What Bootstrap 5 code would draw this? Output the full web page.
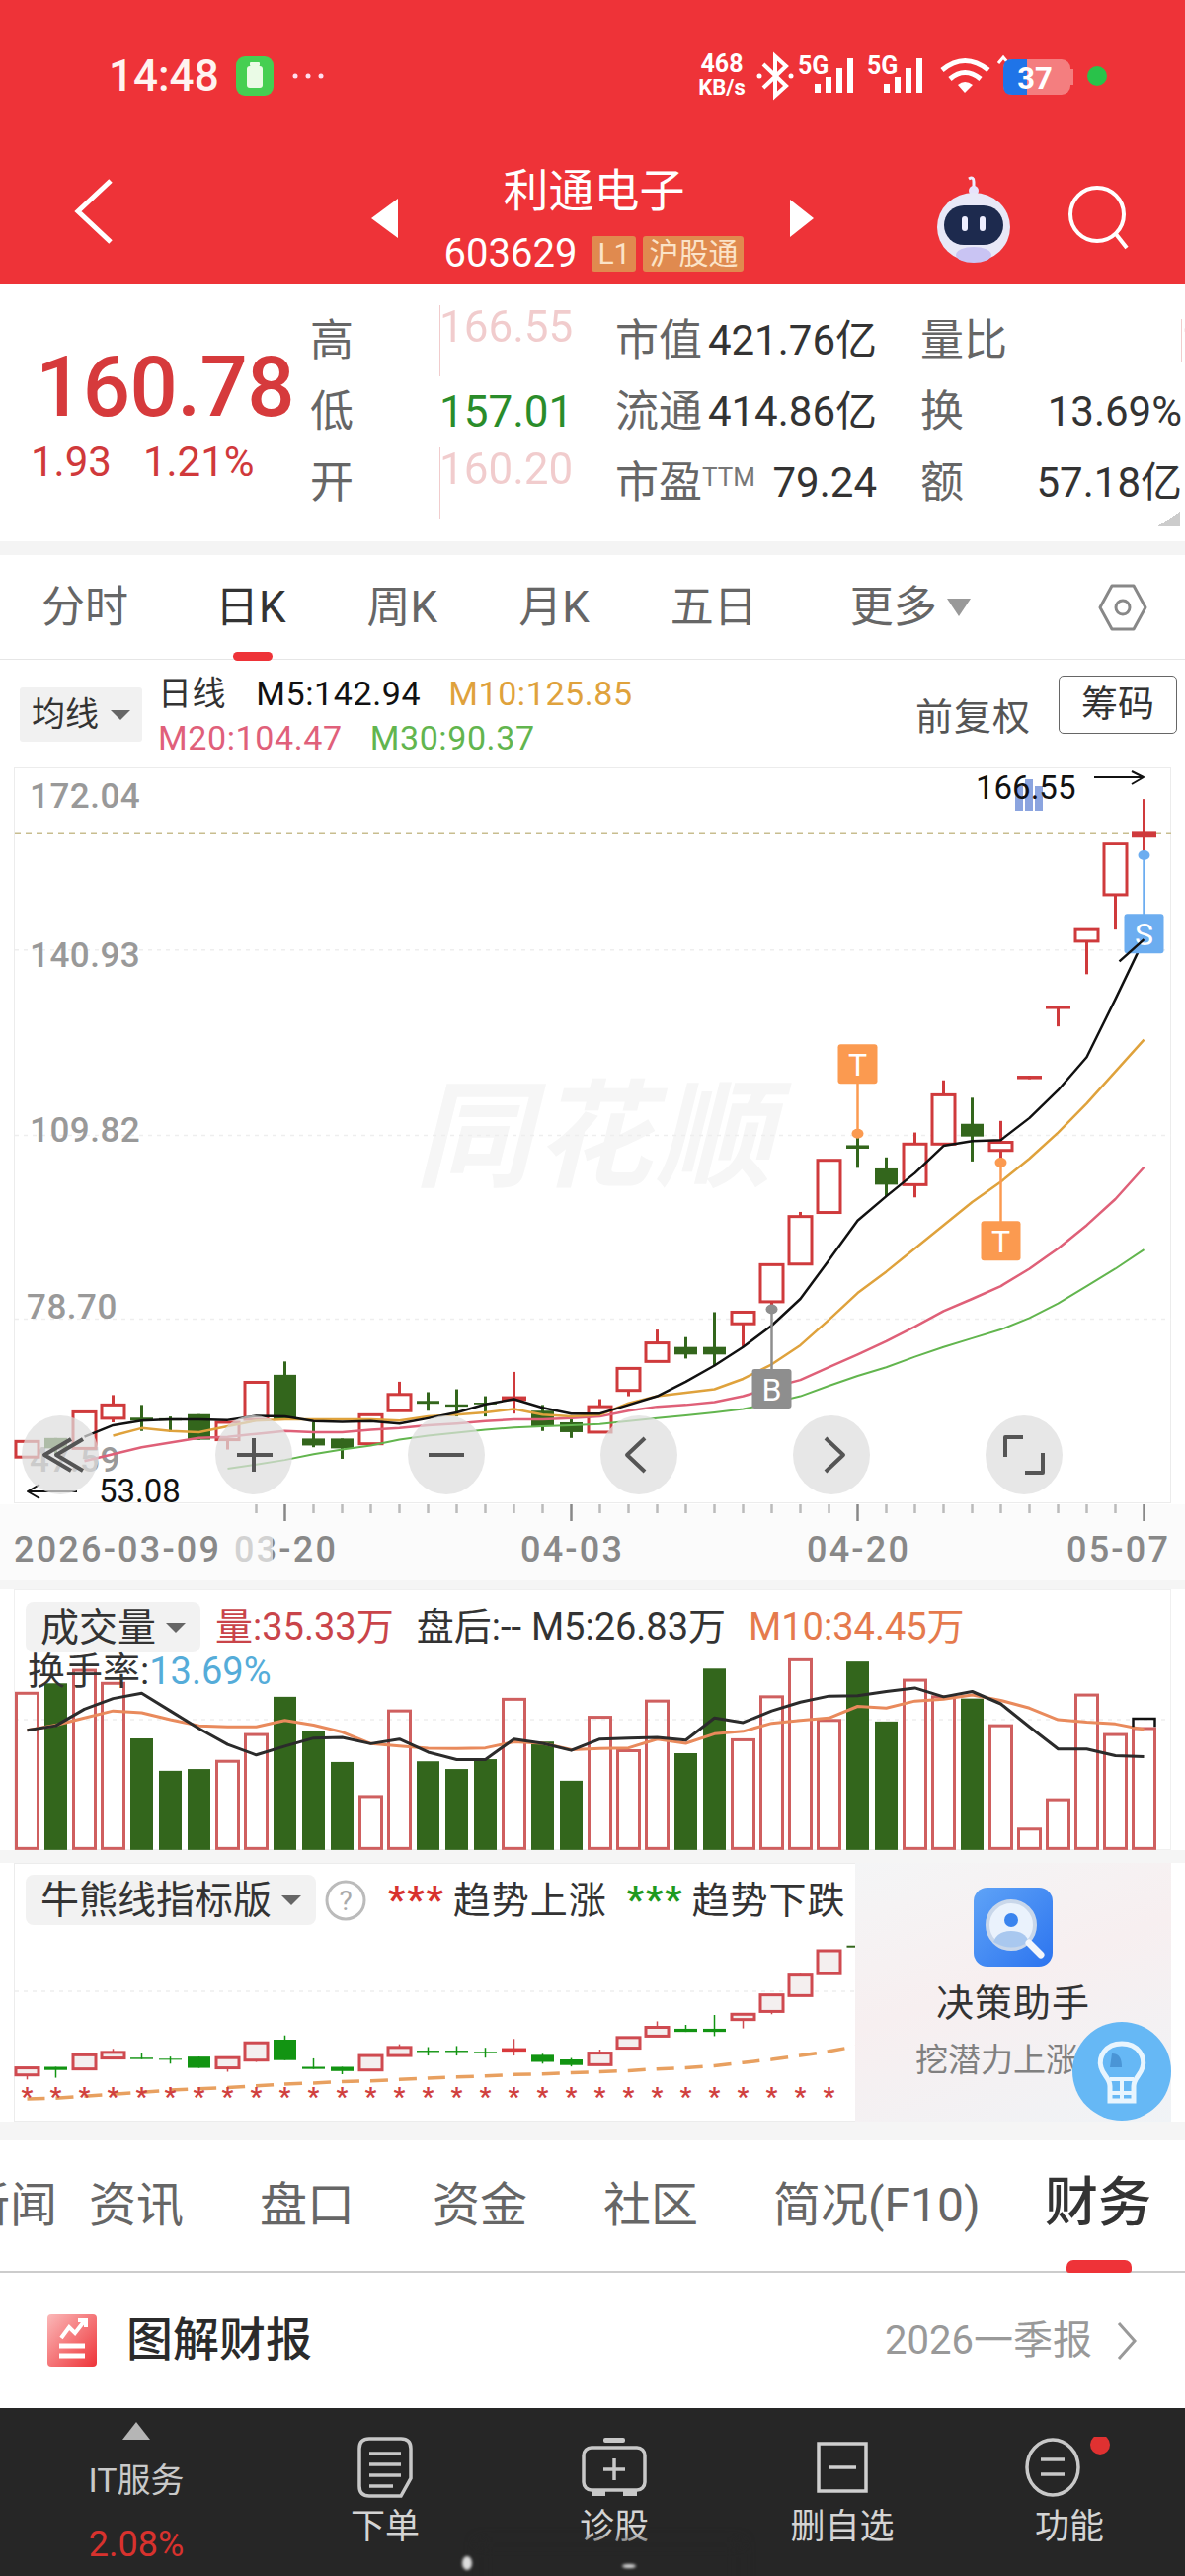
<!DOCTYPE html>
<html lang="zh">
<head>
<meta charset="utf-8">
<title>利通电子</title>
<link href="https://cdn.jsdelivr.net/npm/bootstrap@5.3.0/dist/css/bootstrap.min.css" rel="stylesheet">
<style>
html,body{margin:0;background:#fff}
body{font-family:Roboto,"Noto Sans CJK SC",sans-serif;color:#333}
svg{display:block}
svg text{font-family:Roboto,"Noto Sans CJK SC",sans-serif}
.app{width:1200px;height:2608px;overflow:hidden;position:relative}
.hdr{background:#ee3338;height:288px;color:#fff}
.sbar{height:154px;padding-left:110px}
.clock{font-size:44px;font-weight:500;line-height:1;color:#fff3f0}
.navr{height:134px;display:grid;grid-template-columns:350px 500px 350px;align-items:center}
.nmid{padding:0 26px 0 26px}
.ttl{font-size:46px;line-height:58px;margin-top:0;text-align:center}
.codeln{font-size:40px;line-height:44px;margin-top:13px;gap:15px}
.tagb{background:#e08a4f;color:#fbe3c8;font-size:30px;line-height:36px;height:36px;padding:0 6px;border-radius:3px}
.tagb+.tagb{margin-left:-8px}
.stat{height:260px;display:grid;grid-template-columns:314px 131px 178px 265px 44px 268px;grid-template-rows:72px 72px 72px;padding-top:21px;align-items:center}
.pricebox{grid-row:1/4;padding-left:36px}
.bigp{font-size:85px;font-weight:500;color:#d63a3c;line-height:86px;margin-top:8px;letter-spacing:-.5px}
.subp{font-size:42px;color:#d0393b;line-height:50px;margin-top:8px;margin-left:-5px;gap:32px}
.lb{font-size:44px;color:#666;line-height:1;white-space:nowrap}
.vr{font-size:44px;line-height:1;color:#c8393c}
.vg{font-size:44px;line-height:1;color:#2a8c2a}
.vk{font-size:42px;line-height:1;color:#333;white-space:nowrap}
.sup{font-size:26px;color:#777;vertical-align:12px}
.corner{position:absolute;left:1172px;top:518px;width:23px;height:15px;background:linear-gradient(to bottom right,transparent 50%,#ccc 50%)}
.band1{height:14px;background:#f4f4f4}
.band2{background:#f5f5f5}
.kt{height:106px;border-bottom:1px solid #e6e6e6;position:relative;padding-left:42px;gap:0}
.kti{font-size:44px;color:#666;line-height:1;white-space:nowrap}
.ktu{position:absolute;left:236px;top:98px;width:40px;height:9px;background:#ee3338;border-radius:5px}
.kh{height:109px;position:relative;padding:12px 8px 0 20px}
.pill{background:#f1f1f1;color:#333;font-size:34px;line-height:55px;height:55px;padding:0 12px;border-radius:3px;white-space:nowrap;display:flex;align-items:center;gap:12px}
.caret{width:0;height:0;border-left:10px solid transparent;border-right:10px solid transparent;border-top:10px solid #666;display:inline-block}
.leg{font-size:34px;line-height:45px;margin-left:16px;white-space:nowrap;letter-spacing:.6px}
.cgo{color:#dfa23c}.cpk{color:#e0607a}.cgr{color:#62b54e}
.fq{font-size:38px;color:#555;letter-spacing:1px;line-height:1;margin-top:27px}
.cm{border:1px solid #666;border-radius:5px;font-size:37px;line-height:57px;height:59px;width:120px;text-align:center;margin-left:28px;margin-top:4px;color:#333}
.pan{position:relative}
.phead{position:absolute;left:26px;top:13px;font-size:38px;line-height:50px;white-space:nowrap}
.pill2{background:#f2f2f2;height:51px;padding:0 15px;border-radius:8px;font-size:39px;color:#333;display:flex;align-items:center;gap:10px}
.t38{font-size:38px;line-height:50px;white-space:nowrap}
.cred{color:#c9444a}.cor{color:#e57a4d}.cbl{color:#55acd9}
.tov{position:absolute;left:28px;top:58px}
.aside{width:320px;height:262px;background:linear-gradient(160deg,#f4f5f6 0%,#f7eff0 45%,#f0f3f6 100%);position:relative;text-align:center;padding-top:25px}
.dn{font-size:38px;line-height:48px;margin-top:13px;color:#333;letter-spacing:1px}
.ds{font-size:33px;line-height:44px;margin-top:12px;color:#808080;white-space:nowrap}
.bulb{position:absolute;left:220px;top:161px}
.tabs{height:134px;border-bottom:2px solid #ccc;position:relative;font-size:48px;color:#666}
.tabi{position:absolute;top:36px;line-height:60px;white-space:nowrap}
.taba{font-size:54px;color:#333;font-weight:500;top:34px}
.tabu{position:absolute;left:1080px;top:121px;width:66px;height:13px;background:#ee3338;border-radius:7px 7px 3px 3px}
.rep{height:137px;padding:0 48px}
.rept{font-size:47px;font-weight:500;color:#2b2b2b;margin-left:25px}
.repm{font-size:40px;color:#999;white-space:nowrap}
.foot{height:170px;background:#262626;display:grid;grid-template-columns:276px 228px 236px 226px 234px;color:#d4d4d4;position:relative}
.fi{text-align:center;font-size:35px;line-height:40px;padding-top:29px}
.fi svg{margin:0 auto}
.fl{margin-top:10px;white-space:nowrap}
.fit{font-size:34px;line-height:40px;margin-top:21px;color:#c9c9c9}
.fip{font-size:36px;line-height:40px;margin-top:25px;color:#d8322e}
.smudge{position:absolute;left:485px;top:136px;width:265px;height:60px;background:#262626;filter:blur(7px)}
.spk{position:absolute;background:#ddd;filter:blur(1.5px);border-radius:50%}
</style>
</head>
<body>
<div class="app">
  <div class="hdr">
    <div class="sbar d-flex align-items-center">
      <span class="clock">14:48</span>
      <svg class="ms-3" width="40" height="42" viewBox="0 0 40 42"><rect x="1" y="1" width="38" height="40" rx="9" fill="#45cf52"/><rect x="12" y="11" width="16" height="22" rx="3" fill="#eafbe6"/><rect x="15" y="7" width="10" height="4" rx="1" fill="#eafbe6"/></svg>
      <svg class="ms-3" width="36" height="8" viewBox="0 0 36 8"><circle cx="5" cy="4" r="2.5" fill="#fde"/><circle cx="18" cy="4" r="2.5" fill="#fde"/><circle cx="31" cy="4" r="2.5" fill="#fde"/></svg>
      <svg class="ms-auto" width="494" height="60" viewBox="706 47 494 60">
        <text x="731" y="73" font-size="25" font-weight="700" fill="#fff" text-anchor="middle">468</text>
        <text x="731" y="96" font-size="22" font-weight="700" fill="#fff" text-anchor="middle">KB/s</text>
        <path d="M773 65 L796 87 L785 97 V57 L796 67 L773 89" fill="none" stroke="#fff" stroke-width="4"/>
        <circle cx="769" cy="77" r="2.5" fill="#fff"/><circle cx="801" cy="77" r="2.5" fill="#fff"/>
        <text x="808" y="75" font-size="25" font-weight="700" fill="#fff">5G</text>
        <g fill="#fff"><rect x="825" y="85" width="6" height="9"/><rect x="836" y="78" width="6" height="16"/><rect x="847" y="69" width="6" height="25"/><rect x="858" y="59" width="6" height="35"/></g>
        <text x="878" y="75" font-size="25" font-weight="700" fill="#fff">5G</text>
        <g fill="#fff"><rect x="895" y="85" width="6" height="9"/><rect x="906" y="78" width="6" height="16"/><rect x="917" y="69" width="6" height="25"/><rect x="928" y="59" width="6" height="35"/></g>
        <path d="M954 71 Q977 52 1001 71 M962 80 Q977 67 993 80" fill="none" stroke="#fff" stroke-width="5"/><path d="M970 86 Q977 80 985 86 L977 94Z" fill="#fff"/>
        <path d="M1011 64 L1016 58 L1021 64" fill="none" stroke="#fff" stroke-width="3"/>
        <rect x="1016" y="60" width="68" height="36" rx="9" fill="#f47e7f"/><path d="M1025 60 H1040 V96 H1025 Q1016 96 1016 87 V69 Q1016 60 1025 60Z" fill="#1f74e8"/><rect x="1084" y="70" width="3" height="16" fill="#f47e7f"/>
        <text x="1048" y="90" font-size="31" font-weight="700" fill="#fff" text-anchor="middle">37</text>
        <circle cx="1111" cy="77" r="10" fill="#29c24a"/>
      </svg>
    </div>
    <div class="navr">
      <svg width="350" height="134" viewBox="0 154 350 134"><polyline points="112,183 79,214 112,245" fill="none" stroke="#fff" stroke-width="5"/></svg>
      <div class="nmid d-flex align-items-center justify-content-between">
        <svg width="27" height="40" viewBox="0 0 27 40"><path d="M27 0V40L0 20Z" fill="#fff"/></svg>
        <div>
          <div class="ttl">利通电子</div>
          <div class="codeln d-flex align-items-center"><span>603629</span><span class="tagb">L1</span><span class="tagb">沪股通</span></div>
        </div>
        <svg width="24" height="38" viewBox="0 0 24 38"><path d="M0 0V38L24 19Z" fill="#fff"/></svg>
      </div>
      <div class="d-flex align-items-center">
        <svg width="86" height="90" viewBox="0 0 86 90" style="margin-left:93px">
          <path d="M43 18 V8 Q43 2 38 5" fill="none" stroke="#eef" stroke-width="3"/><circle cx="43" cy="17" r="5" fill="#e7e3fb"/>
          <ellipse cx="43" cy="54" rx="37" ry="35" fill="#e8e8f7"/><ellipse cx="43" cy="82" rx="18" ry="8" fill="#c9c4f3"/>
          <rect x="13" y="32" width="60" height="40" rx="20" fill="#1d2a4e"/><rect x="31" y="43" width="6" height="15" rx="3" fill="#eef"/><rect x="49" y="43" width="6" height="15" rx="3" fill="#eef"/>
        </svg>
        <svg width="66" height="66" viewBox="0 0 66 66" style="margin-left:52px"><circle cx="30" cy="29" r="27" fill="none" stroke="#fff" stroke-width="4"/><path d="M49 49 L60 63" stroke="#fff" stroke-width="4"/></svg>
      </div>
    </div>
  </div>

  <div class="stat">
    <div class="pricebox">
      <div class="bigp">160.78</div>
      <div class="subp d-flex"><span>1.93</span><span>1.21%</span></div>
    </div>
    <div class="lb">高</div><div class="vr">166.55</div><div class="d-flex justify-content-between align-items-center"><span class="lb">市值</span><span class="vk">421.76亿</span></div><div></div><div class="d-flex justify-content-between align-items-center"><span class="lb">量比</span><span class="vr" style="margin-right:3px">1.37</span></div>
    <div class="lb">低</div><div class="vg">157.01</div><div class="d-flex justify-content-between align-items-center"><span class="lb">流通</span><span class="vk">414.86亿</span></div><div></div><div class="d-flex justify-content-between align-items-center"><span class="lb">换</span><span class="vk" style="margin-right:3px">13.69%</span></div>
    <div class="lb">开</div><div class="vr">160.20</div><div class="d-flex justify-content-between align-items-center"><span class="lb">市盈<span class="sup">TTM</span></span><span class="vk">79.24</span></div><div></div><div class="d-flex justify-content-between align-items-center"><span class="lb">额</span><span class="vk" style="margin-right:3px">57.18亿</span></div>
  </div>
  <div class="corner"></div>
  <div class="band1"></div>

  <div class="kt d-flex align-items-center">
    <span class="kti">分时</span><span class="kti" style="margin-left:88px;color:#333">日K</span><span class="kti" style="margin-left:82px">周K</span><span class="kti" style="margin-left:82px">月K</span><span class="kti" style="margin-left:82px">五日</span><span class="kti" style="margin-left:94px">更多</span>
    <span class="caret" style="margin-left:10px;border-left-width:12px;border-right-width:12px;border-top:18px solid #999"></span>
    <svg class="ms-auto" style="margin-right:38px" width="50" height="50" viewBox="0 0 50 50"><path d="M14 3H36L48 25L36 47H14L2 25Z" fill="none" stroke="#888" stroke-width="3" stroke-linejoin="round"/><circle cx="25" cy="25" r="7" fill="none" stroke="#888" stroke-width="3"/></svg>
    <div class="ktu"></div>
  </div>

  <div class="kh d-flex align-items-start">
    <div class="pill mt-3">均线<span class="caret"></span></div>
    <div class="leg">
      <div class="d-flex"><span style="color:#333">日线</span><span style="color:#111;margin-left:30px">M5:142.94</span><span class="cgo" style="margin-left:28px">M10:125.85</span></div>
      <div class="d-flex"><span class="cpk">M20:104.47</span><span class="cgr" style="margin-left:28px">M30:90.37</span></div>
    </div>
    <div class="ms-auto d-flex"><span class="fq">前复权</span><span class="cm">筹码</span></div>
  </div>

  <svg id="kchart" width="1200" height="823" viewBox="0 777 1200 823"></svg>
  <div class="band2" style="height:9px"></div>

  <div class="pan">
    <svg id="vchart" width="1200" height="264" viewBox="0 1609 1200 264"></svg>
    <div class="phead d-flex">
      <div class="pill2">成交量<span class="caret"></span></div>
      <span class="cred" style="margin-left:15px">量:35.33万</span>
      <span style="margin-left:23px">盘后:-- </span>
      <span style="margin-left:10px">M5:26.83万</span>
      <span class="cor" style="margin-left:23px">M10:34.45万</span>
    </div>
    <div class="tov t38">换手率:<span class="cbl">13.69%</span></div>
  </div>
  <div class="band2" style="height:13px"></div>

  <div class="d-flex">
    <div class="pan">
      <svg id="ichart" width="866" height="262" viewBox="0 1886 866 262"></svg>
      <div class="phead d-flex align-items-center" style="top:12px">
        <div class="pill2">牛熊线指标版<span class="caret"></span></div>
        <svg style="margin-left:9px" width="42" height="42" viewBox="0 0 42 42"><circle cx="21" cy="21" r="19" fill="#fff" stroke="#bbb" stroke-width="3"/><text x="21" y="31" font-size="28" fill="#aaa" text-anchor="middle">?</text></svg>
        <span style="margin-left:22px;color:#d8322e;font-weight:700;letter-spacing:2px">***</span><span style="margin-left:8px;letter-spacing:1px">趋势上涨</span>
        <span style="margin-left:20px;color:#1f9a1f;font-weight:700;letter-spacing:2px">***</span><span style="margin-left:8px;letter-spacing:1px">趋势下跌</span>
      </div>
    </div>
    <div class="aside">
      <svg class="mx-auto" width="80" height="80" viewBox="0 0 80 80"><defs><linearGradient id="bg1" x1="0" y1="0" x2="1" y2="1"><stop offset="0" stop-color="#5fa3f7"/><stop offset="1" stop-color="#2c74ef"/></linearGradient></defs><rect width="80" height="80" rx="14" fill="url(#bg1)"/><circle cx="38" cy="38" r="24" fill="#eaf2fc" stroke="#c9d7ea" stroke-width="4"/><circle cx="38" cy="33" r="7" fill="#3a84ee"/><path d="M20 55 Q24 44 38 44 Q52 44 56 55 Q38 66 20 55Z" fill="#a9c8ef"/><path d="M56 56 L68 68" stroke="#f3f6fb" stroke-width="7" stroke-linecap="round"/></svg>
      <div class="dn">决策助手</div>
      <div class="ds">挖潜力上涨股</div>
      <svg class="bulb" width="100" height="100" viewBox="0 0 100 100"><circle cx="50" cy="50" r="50" fill="#66b8f5"/><path d="M50 22 C33 22 26 36 29 46 C31 54 38 57 38 65 V80 H62 V65 C62 57 69 54 71 46 C74 36 67 22 50 22Z" fill="none" stroke="#e8f5fe" stroke-width="5"/><path d="M38 58 H62 M50 58 V78 M40 72 H60" stroke="#e8f5fe" stroke-width="4" fill="none"/><path d="M40 32 C48 32 50 38 50 46 H38Z" fill="#4a95d6"/></svg>
    </div>
  </div>
  <div class="band2" style="height:19px"></div>

  <div class="tabs">
    <span class="tabi" style="left:-38px">新闻</span>
    <span class="tabi" style="left:90px">资讯</span>
    <span class="tabi" style="left:263px">盘口</span>
    <span class="tabi" style="left:438px">资金</span>
    <span class="tabi" style="left:611px">社区</span>
    <span class="tabi" style="left:783px">简况(F10)</span>
    <span class="tabi taba" style="left:1058px">财务</span>
    <div class="tabu"></div>
  </div>

  <div class="rep d-flex align-items-center">
    <svg width="55" height="53" viewBox="0 0 55 53"><defs><linearGradient id="bg2" x1="0" y1="0" x2="1" y2="1"><stop offset="0" stop-color="#fbb9b9"/><stop offset="1" stop-color="#ee3338"/></linearGradient></defs><rect width="50" height="53" rx="4" fill="url(#bg2)"/><path d="M14 24 L22 13 L28 19 L38 6 M31 6 H39 V13" stroke="#fff" stroke-width="4" fill="none"/><path d="M12 32 H38 M12 42 H38" stroke="#fff" stroke-width="5"/></svg>
    <span class="rept">图解财报</span>
    <span class="repm ms-auto">2026一季报</span>
    <svg class="ms-4" width="22" height="44" viewBox="0 0 22 44"><polyline points="3,4 19,22 3,40" fill="none" stroke="#999" stroke-width="3"/></svg>
  </div>

  <div class="foot">
    <div class="fi" style="padding-top:14px">
      <svg width="28" height="18" viewBox="0 0 28 18"><path d="M14 0L28 18H0Z" fill="#b5b5b5"/></svg>
      <div class="fit">IT服务</div>
      <div class="fip">2.08%</div>
    </div>
    <div class="fi">
      <svg width="56" height="62" viewBox="0 0 56 62"><path d="M12 2H44Q54 2 54 12V42L44 60H12Q2 60 2 50V12Q2 2 12 2Z" fill="none" stroke="#c8c8c8" stroke-width="3.5"/><path d="M12 17H44M12 28H44M12 39H44M12 50H36" stroke="#c8c8c8" stroke-width="3.5"/></svg>
      <div class="fl">下单</div>
    </div>
    <div class="fi">
      <svg width="66" height="62" viewBox="0 0 66 62"><rect x="22" y="1" width="22" height="5" rx="2" fill="#c8c8c8"/><rect x="2" y="11" width="62" height="43" rx="8" fill="none" stroke="#c8c8c8" stroke-width="3.5"/><path d="M33 22V44M22 33H44" stroke="#c8c8c8" stroke-width="3.5"/><path d="M10 54H24V60H10ZM42 54H56V60H42Z" fill="#c8c8c8"/></svg>
      <div class="fl">诊股</div>
    </div>
    <div class="fi" style="padding-top:34px">
      <svg width="52" height="52" viewBox="0 0 52 52"><rect x="2" y="2" width="48" height="48" fill="none" stroke="#cfcfcf" stroke-width="3.5"/><path d="M12 26H40" stroke="#cfcfcf" stroke-width="3.5"/></svg>
      <div class="fl" style="margin-top:15px">删自选</div>
    </div>
    <div class="fi">
      <svg width="90" height="62" viewBox="0 0 90 62" style="margin-left:72px"><ellipse cx="28" cy="31" rx="26" ry="28" fill="none" stroke="#c8c8c8" stroke-width="3.5"/><path d="M16 23H40M16 38H40" stroke="#c8c8c8" stroke-width="3.5"/><ellipse cx="76" cy="8" rx="10" ry="10" fill="#e03131"/></svg>
      <div class="fl">功能</div>
    </div>
    <div class="smudge"></div>
    <div class="spk" style="left:468px;top:150px;width:10px;height:14px"></div>
    <div class="spk" style="left:630px;top:158px;width:14px;height:4px"></div>
  </div>
</div>

<script src="https://cdn.jsdelivr.net/npm/bootstrap@5.3.0/dist/js/bootstrap.bundle.min.js"></script>
<script>
const cx=i=>27.5+29*i, P=z=>680+z/1.704, V=z=>1600+z/2.8;
const RED='#cf3a3c',GRN='#33661c';
function line(x1,y1,x2,y2,c,w,extra){return `<line x1="${x1}" y1="${y1}" x2="${x2}" y2="${y2}" stroke="${c}" stroke-width="${w}" ${extra||''}/>`}
function poly(pts,c,w,extra){return `<polyline points="${pts.map(p=>p.join(',')).join(' ')}" fill="none" stroke="${c}" stroke-width="${w}" stroke-linejoin="round" ${extra||''}/>`}
function txt(x,y,s,size,fill,extra){return `<text x="${x}" y="${y}" font-size="${size}" fill="${fill}" ${extra||''}>${s}</text>`}

/* price candles: type, body top, body bottom, wick top, wick bottom (reference y scale) */
const K=[['h',1328,1355,1328,1355],['g',1322,1340,1322,1350],['h',1277,1340,1277,1340],['h',1265,1288,1248,1295],['g',1287,1292,1265,1310],['g',1288,1292,1285,1312],['g',1281,1325,1281,1325],['h',1295,1325,1295,1342],['h',1226,1290,1226,1290],['g',1213,1290,1190,1290],['g',1323,1335,1295,1338],['g',1323,1340,1323,1358],['h',1282,1332,1282,1332],['h',1247,1275,1225,1275],['g',1258,1263,1243,1275],['g',1264,1268,1238,1285],['g',1261,1264,1250,1285],['r',1250,1258,1208,1280],['g',1275,1302,1265,1310],['g',1295,1312,1290,1322],['h',1268,1312,1255,1312],['h',1202,1240,1202,1250],['h',1158,1190,1135,1190],['g',1165,1178,1148,1185],['g',1165,1178,1105,1198],['h',1105,1125,1105,1165],['h',1023,1087,1023,1100],['h',940,1022,932,1022],['h',843,933,843,933],['g',817,823,800,856],['g',857,885,838,905],['h',815,885,795,907],['h',730,815,705,815],['g',780,802,735,845],['h',812,826,775,845],['r',697,703,697,703],['r',577,582,577,612],['h',445,465,445,522],['h',296,385,296,445],['r',275,285,220,310]];
const ma5=[,,1320,1300,1292,1290,1290,1291,1284,1285,1293,1294,1293,1297,1288,1278,1264,1255,1270,1280,1280,1265,1250,1225,1197,1165,1128,1082,1015,947,905,865,818,810,808,770,722,665,565,462];
const ma10=[,,,1318,1305,1310,1312,1302,1292,1290,1290,1290,1290,1292,1285,1282,1278,1272,1282,1285,1282,1262,1250,1244,1238,1220,1195,1162,1118,1072,1035,995,955,915,880,840,795,745,690,635];
const ma20=[,,1362,1350,1338,1330,1322,1320,1315,1310,1312,1312,1308,1305,1300,1297,1293,1290,1290,1288,1285,1275,1268,1265,1260,1250,1235,1222,1200,1178,1155,1130,1103,1082,1060,1030,995,955,910,855];
const ma30=[,,,,,,,1375,1368,1360,1350,1342,1335,1325,1318,1313,1308,1304,1302,1300,1298,1293,1288,1283,1278,1272,1262,1250,1232,1215,1200,1182,1165,1150,1135,1115,1090,1060,1030,997];
const series=(a,f)=>a.map((v,i)=>[cx(i),f(v)]).filter(p=>p);

let s='';
s+=`<rect x="14.5" y="777.5" width="1171" height="744" fill="#fff" stroke="#ececec"/>`;
s+=`<rect x="0" y="1523" width="1200" height="77" fill="#fbfbfb"/>`;
s+=`<text x="420" y="1192" font-size="118" font-weight="700" fill="#f6f6f6" letter-spacing="4" font-style="italic">同花顺</text>`;
s+=line(15,P(278),1186,P(278),'#c8bd8f',1.5,'stroke-dasharray="6 5"');
[480,800,1117].forEach(z=>s+=line(15,P(z),1186,P(z),'#eeeeee',1.5,'stroke-dasharray="4 5"'));
[[30,818,'172.04'],[30,979,'140.93'],[30,1156,'109.82'],[27,1335,'78.70'],[30,1490,'47.59']].forEach(a=>s+=txt(a[0],a[1],a[2],35,'#999','font-weight="500" letter-spacing=".5"'));
K.forEach((k,i)=>{const x=cx(i),[t,a,b,h,l]=k,c=t=='g'?GRN:RED;
  s+=line(x,P(h),x,P(l),c,3);
  if(t=='h')s+=`<rect x="${x-11.5}" y="${P(a)}" width="23" height="${P(b)-P(a)}" fill="#fff" stroke="${c}" stroke-width="3"/>`;
  else s+=`<rect x="${x-11.5-(t=='r'?1:0)}" y="${P(a)}" width="${t=='r'?25:23}" height="${P(b)-P(a)}" fill="${c}"/>`;
});
s+=poly(series(ma30,P),'#62b54e',2);s+=poly(series(ma20,P),'#df6078',2.5);s+=poly(series(ma10,P),'#dfa23c',2.5);s+=poly(series(ma5,P),'#111',2.5);
/* trade markers */
function mark(i,y1,y2,by,c,t){const x=cx(i);let m=line(x,P(y1),x,P(y2),c,2.5)+`<ellipse cx="${x}" cy="${P(y1)}" rx="6" ry="5" fill="${c}"/>`;
 m+=`<rect x="${x-20}" y="${P(by)}" width="40" height="40" rx="3" fill="${c}"/>`+txt(x,P(by)+32,t,32,'#fff','text-anchor="middle"');return m}
s+=mark(29,797,700,643,'#fb9a50','T');s+=mark(34,847,950,948,'#fb9a50','T');s+=mark(26,1100,1205,1203,'#8e8e8e','B');s+=mark(39,317,420,418,'#6cadf0','S');
s+=poly(series(ma5.map((v,i)=>i==39?v:undefined),P),'#111',2.5);
s+=line(cx(38)+4,P(500),cx(39),P(462),'#111',2.5);
/* extremes */
s+=`<g fill="#7f9bdc" opacity=".9"><rect x="1028" y="796" width="8" height="25"/><rect x="1038" y="789" width="8" height="32"/><rect x="1048" y="796" width="8" height="25"/></g>`;
s+=txt(988,809,'166.55',33,'#111');
s+=line(1108,787,1158,787,'#111',2)+poly([[1146,781],[1158,787],[1146,794]],'#111',2);
s+=line(28,1510,78,1510,'#111',2)+poly([[40,1503],[28,1510],[40,1517]],'#111',2);
s+=txt(100,1521,'53.08',33,'#111');
/* overlay buttons */
[61,257,452,647,842,1037].forEach(x=>s+=`<ellipse cx="${x}" cy="1473" rx="39" ry="40" fill="#dedede" fill-opacity=".72"/>`);
const ic='#555';
s+=poly([[72,1457],[45,1473],[72,1489]],ic,4)+poly([[84,1457],[57,1473],[84,1489]],ic,4);
s+=line(240,1473,276,1473,ic,4)+line(257,1456,257,1490,ic,4);
s+=line(434,1473,470,1473,ic,4);
s+=poly([[653,1456],[635,1473],[653,1490]],ic,4);
s+=poly([[836,1456],[854,1473],[836,1490]],ic,4);
s+=poly([[1018,1475],[1018,1455],[1036,1455]],ic,4)+poly([[1038,1491],[1056,1491],[1056,1471]],ic,4);
/* axis ticks and dates */
for(let i=8;i<40;i++){const big=(i-9)%10==0;s+=line(cx(i),1523,cx(i),big?1540:1532,big?'#888':'#bbb',2.5)}
const dt=(x,v,o)=>txt(x,1581,v,36,o||'#888','font-weight="500" letter-spacing="2.2"');
s+=dt(14,'2026-03-09');s+=dt(237,'03-20');s+=`<rect x="236" y="1550" width="40" height="36" fill="#fbfbfb" fill-opacity=".65"/>`;s+=dt(527,'04-03');s+=dt(817,'04-20');s+=dt(1080,'05-07');
document.getElementById('kchart').innerHTML=s;

/* volume */
const VT=[[320,'h'],[292,'g'],[255,'h'],[292,'h'],[448,'g'],[540,'g'],[535,'g'],[513,'h'],[437,'h'],[330,'g'],[428,'g'],[515,'g'],[613,'h'],[370,'h'],[513,'g'],[535,'g'],[507,'g'],[337,'h'],[457,'g'],[568,'g'],[388,'h'],[483,'h'],[342,'h'],[490,'g'],[250,'g'],[452,'h'],[330,'h'],[225,'h'],[397,'h'],[230,'g'],[400,'g'],[283,'h'],[330,'h'],[335,'g'],[412,'h'],[705,'h'],[622,'h'],[325,'h'],[437,'h'],[420,'h']];
const vm5=[425,412,365,335,320,370,420,465,495,470,447,445,463,450,487,508,508,450,462,482,450,447,445,453,390,403,370,345,328,327,315,305,330,315,350,415,478,478,497,500];
const vm10=[425,410,390,370,375,395,412,415,415,397,410,430,463,470,476,477,475,458,462,480,477,475,450,462,435,428,405,397,390,357,362,342,337,325,340,362,395,402,407,423];
let v=`<rect x="14.5" y="1609.5" width="1171" height="263" fill="#fff" stroke="#f0f0f0"/>`;
v+=line(15,V(395),1186,V(395),'#eeeeee',1.5,'stroke-dasharray="4 5"');
const base=V(764);
VT.forEach((b,i)=>{const x=cx(i),y=V(b[0]);
 if(b[1]=='g')v+=`<rect x="${x-11.5}" y="${y}" width="23" height="${base-y}" fill="#33661c"/>`;
 else v+=`<rect x="${x-11}" y="${y}" width="22" height="${base-y-1.5}" fill="#fff" fill-opacity="0" stroke="#cf5f5f" stroke-width="3"/>`;
});
v+=poly(vm10.map((z,i)=>[cx(i),V(z)]),'#e98a5c',3);
v+=poly(vm5.map((z,i)=>[cx(i),V(z)]),'#2b2b2b',3);
const e=cx(39);v+=`<path d="M${e-11} ${V(415)}V${V(392)}H${e+11}V${V(415)}" fill="none" stroke="#111" stroke-width="2.5"/>`;
document.getElementById('vchart').innerHTML=v;

/* indicator */
const I=[['h',1382,1402,1382,1415],['g',1379,1388,1379,1410],['h',1345,1385,1345,1385],['h',1338,1354,1328,1354],['g',1353,1357,1340,1357],['g',1356,1359,1350,1370],['g',1350,1382,1350,1382],['h',1353,1382,1353,1393],['h',1311,1360,1311,1365],['g',1302,1360,1290,1360],['g',1379,1385,1355,1385],['g',1379,1391,1379,1400],['h',1347,1388,1347,1388],['h',1324,1347,1315,1347],['g',1333,1337,1323,1347],['g',1333,1337,1320,1347],['g',1336,1338,1325,1353],['r',1326,1336,1300,1347],['g',1345,1365,1342,1370],['g',1358,1374,1354,1378],['h',1340,1373,1330,1373],['h',1296,1326,1296,1329],['h',1267,1292,1250,1292],['g',1271,1280,1260,1280],['g',1271,1280,1232,1292],['h',1230,1245,1230,1270],['h',1175,1222,1175,1230],['h',1119,1177,1115,1177],['h',1050,1115,1050,1115]];
const dash=[1470,1468,1462,1457,1451,1445,1441,1438,1433,1428,1425,1421,1419,1415,1411,1408,1405,1401,1399,1396,1393,1390,1385,1382,1376,1367,1358,1347,1335,1320];
let n=`<rect x="14.5" y="1886.5" width="1200" height="261" fill="#fff" stroke="#ececec"/>`;
n+=line(15,V(1165),866,V(1165),'#eeeeee',1.5,'stroke-dasharray="4 5"');
I.forEach((k,i)=>{const x=cx(i),[t,a,b,h,l]=k,c=t=='g'?'#129412':'#cf4a50';
 n+=line(x,V(h),x,V(l),c,t=='g'?1.5:1.5);
 if(t=='h')n+=`<rect x="${x-11.5}" y="${V(a)}" width="23" height="${V(b)-V(a)}" fill="#f4efef" stroke="${c}" stroke-width="3"/>`;
 else n+=`<rect x="${x-11.5-(t=='r'?1:0)}" y="${V(a)}" width="${t=='r'?25:23}" height="${V(b)-V(a)}" fill="${t=='r'?'#d8393c':c}"/>`;
});
n+=line(cx(29)-11,V(1038),cx(29)+8,V(1038),'#33661c',2);
n+=poly(dash.map((z,i)=>[cx(i),V(z)]),'#e8a060',3.5,'stroke-dasharray="18 11"');
for(let i=0;i<29;i++)n+=`<text x="${cx(i)}" y="${V(1460)+11}" font-size="26" font-weight="700" fill="#d0403f" text-anchor="middle">*</text>`;
document.getElementById('ichart').innerHTML=n;
</script>
</body>
</html>
